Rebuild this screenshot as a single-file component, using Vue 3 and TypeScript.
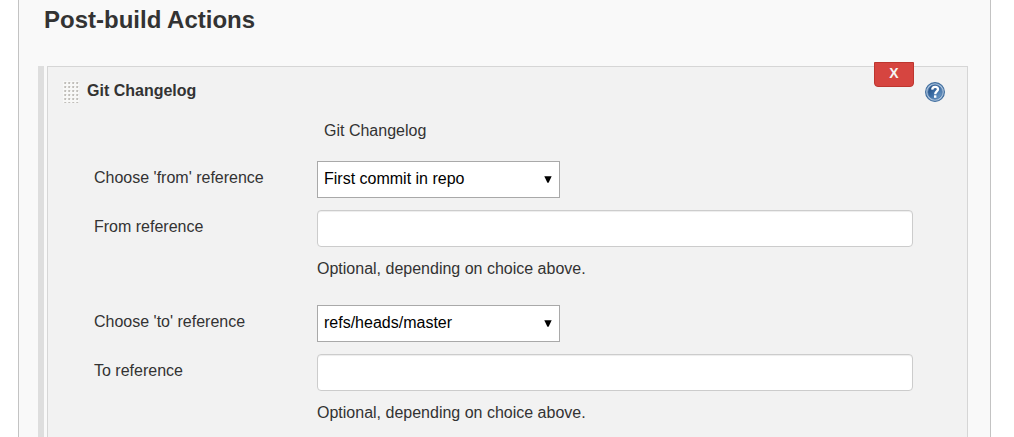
<script setup lang="ts">
import { reactive } from 'vue'

interface ReferenceGroup {
  id: string
  chooseLabel: string
  inputLabel: string
  choice: string
  value: string
}

const choices: string[] = ['First commit in repo', 'refs/heads/master', 'Ref', 'Commit']

const groups = reactive<ReferenceGroup[]>([
  { id: 'from', chooseLabel: "Choose 'from' reference", inputLabel: 'From reference', choice: 'First commit in repo', value: '' },
  { id: 'to', chooseLabel: "Choose 'to' reference", inputLabel: 'To reference', choice: 'refs/heads/master', value: '' },
])
</script>

<template>
  <main class="page">
    <h1 class="heading">Post-build Actions</h1>
    <div class="step">
      <div class="rail"></div>
      <section class="card">
        <button class="remove" type="button">X</button>
        <header class="card-head">
          <svg class="grip" width="16" height="22" viewBox="0 0 16 22" aria-hidden="true">
            <defs>
              <pattern id="grip-dots" width="4" height="4" patternUnits="userSpaceOnUse">
                <rect width="4" height="4" fill="#f8f8f7" />
                <rect x="1" y="1" width="2" height="2" fill="#cfcdc9" />
                <rect x="2" y="1" width="1" height="2" fill="#c0beba" />
                <rect x="3" y="1" width="1" height="1" fill="#ebeae8" />
              </pattern>
            </defs>
            <rect width="16" height="22" fill="url(#grip-dots)" />
          </svg>
          <h2 class="title">Git Changelog</h2>
          <button class="help" type="button" aria-label="Help">
            <svg width="20" height="20" viewBox="0 0 20 20" aria-hidden="true">
              <defs>
                <linearGradient id="help-fill" x1="0" y1="0" x2="1" y2="1">
                  <stop offset="0" stop-color="#1d4477" />
                  <stop offset="0.5" stop-color="#3c6da5" />
                  <stop offset="1" stop-color="#7ba6cf" />
                </linearGradient>
              </defs>
              <circle cx="10" cy="10" r="9.4" fill="#a9c1dc" stroke="#426f9f" stroke-width="1.2" />
              <circle cx="10" cy="10" r="7.2" fill="url(#help-fill)" stroke="#4a76a7" stroke-width="0.8" />
              <path d="M7.2 7.6C7.3 5.4 8.4 4.8 10.1 4.8C11.9 4.8 13 5.6 13 7.2C13 9.3 10.2 9.4 10.2 12.2" fill="none" stroke="#ffffff" stroke-width="2.3" />
              <rect x="9" y="13.3" width="2.4" height="2.5" fill="#ffffff" />
            </svg>
          </button>
        </header>
        <p class="name">Git Changelog</p>
        <div v-for="group in groups" :key="group.id" class="group">
          <label class="label" :for="`${group.id}-choice`">{{ group.chooseLabel }}</label>
          <div class="picker">
            <select :id="`${group.id}-choice`" v-model="group.choice" class="select">
              <option v-for="choice in choices" :key="choice" :value="choice">{{ choice }}</option>
            </select>
            <svg class="arrow" width="8" height="8" viewBox="0 0 8 8" aria-hidden="true">
              <path d="M0.3 0.2H7.7L4.6 6.8H3.4Z" fill="#000000" />
            </svg>
          </div>
          <label class="label" :for="`${group.id}-value`">{{ group.inputLabel }}</label>
          <input :id="`${group.id}-value`" v-model="group.value" class="input" type="text" />
          <p class="hint">Optional, depending on choice above.</p>
        </div>
      </section>
    </div>
  </main>
</template>

<style>
body {
  margin: 0;
  background: #ffffff;
}
</style>

<style scoped>
.page {
  box-sizing: border-box;
  display: flex;
  flex-direction: column;
  min-height: 100vh;
  margin: 0 23px 0 18px;
  padding: 0 22px 0 19px;
  border: solid #c3c3c3;
  border-width: 0 1px;
  background: #f9f9f9;
  color: #333333;
  font: 16px/20px "Liberation Sans", Arial, sans-serif;
}

.heading {
  margin: 0 6px 26px;
  font-size: 24px;
  line-height: 40px;
}

.step {
  display: flex;
  flex: 1;
  gap: 3px;
}

.rail {
  width: 6px;
  background: #dedede;
}

.card {
  position: relative;
  flex: 1;
  padding: 14px 22px 0 15px;
  border: solid #d6d6d6;
  border-width: 1px 1px 0;
  background: #f2f2f2;
}

.remove {
  position: absolute;
  top: -5px;
  right: 53px;
  width: 40px;
  height: 25px;
  padding: 0 0 4px;
  border: 1px solid #bd362f;
  border-radius: 0 0 4px 4px;
  background: #d64540;
  color: #f5f5f5;
  font: bold 14px/20px "Liberation Sans", Arial, sans-serif;
}

.card-head {
  display: flex;
  align-items: flex-start;
}

.title {
  flex: 1;
  margin: 0 0 0 8px;
  font-size: 16px;
  line-height: 20px;
}

.help {
  display: block;
  margin-top: 1px;
  padding: 0;
  border: 0;
  background: none;
}

.help svg,
.grip {
  display: block;
}

.name {
  margin: 18px 0 20px 261px;
}

.group {
  display: grid;
  grid-template-columns: 223px 1fr;
  grid-template-rows: 37px 37px 20px;
  row-gap: 12px;
  margin: 0 32px 26px 31px;
}

.label {
  padding-top: 7px;
}

.picker {
  position: relative;
  width: 243px;
}

.select {
  box-sizing: border-box;
  width: 100%;
  height: 37px;
  padding: 0 24px 2px 6px;
  border: 1px solid #a9a9a9;
  border-radius: 0;
  appearance: none;
  background: #ffffff;
  color: #000000;
  font: 16px/20px "Liberation Sans", Arial, sans-serif;
}

.arrow {
  position: absolute;
  top: 15px;
  right: 8px;
  pointer-events: none;
}

.input {
  box-sizing: border-box;
  width: 100%;
  height: 37px;
  padding: 4px 6px;
  border: 1px solid #cccccc;
  border-radius: 4px;
  background: #ffffff;
  box-shadow: inset 0 1px 1px rgba(0, 0, 0, 0.075);
  color: #333333;
  font: 16px/20px "Liberation Sans", Arial, sans-serif;
}

.hint {
  grid-column: 2;
  margin: 0;
}
</style>
